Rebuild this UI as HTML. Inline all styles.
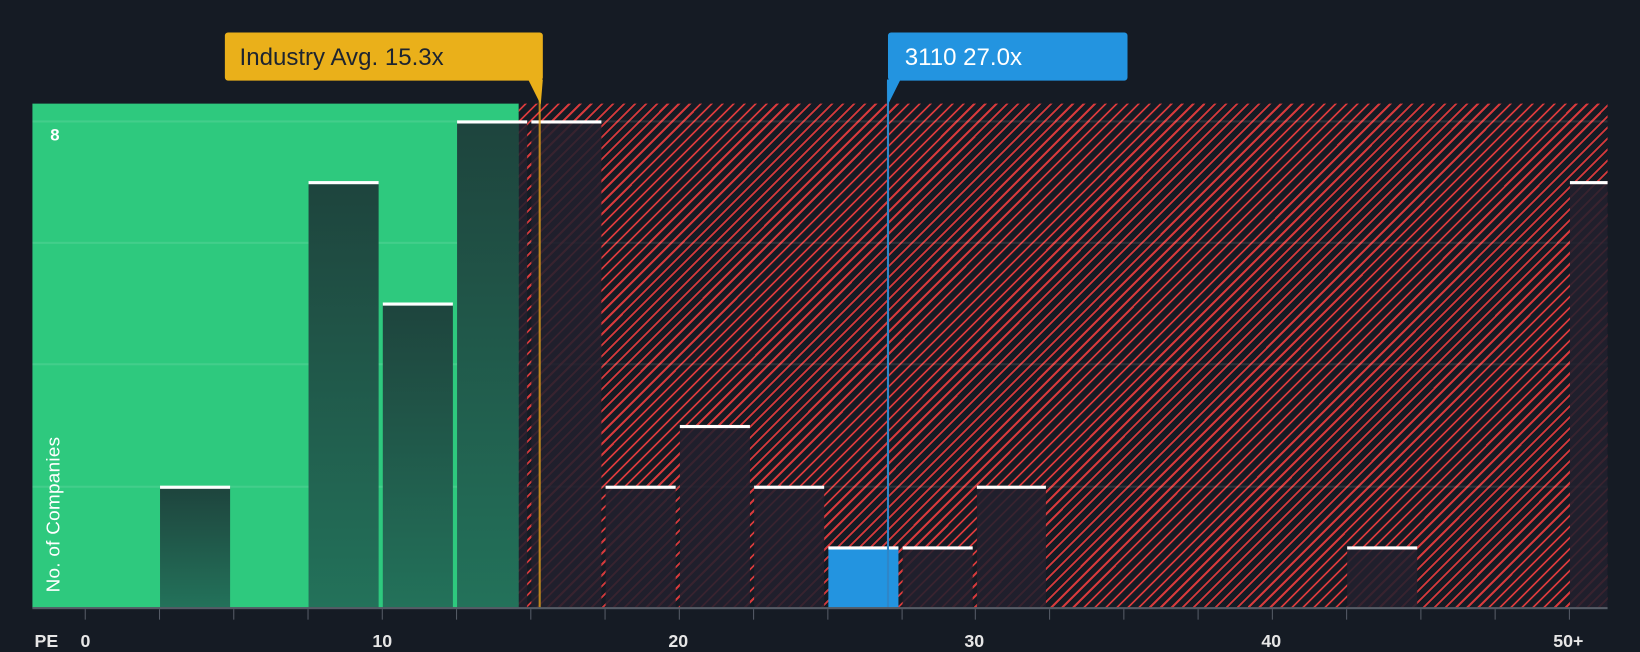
<!DOCTYPE html>
<html><head><meta charset="utf-8"><style>
html,body{margin:0;padding:0;background:#151b24;width:1640px;height:650px;overflow:hidden}
#w{position:absolute;left:0;top:0;width:1568px;height:621px;transform-origin:0 0;transform:scale(1.04592,1.04670);font-family:"Liberation Sans",sans-serif}
.a{position:absolute}
.hatch{background:repeating-linear-gradient(-45deg,#151b24 0px,#151b24 5.6px,#d63a3c 5.6px,#d63a3c 7.4px)}
.g{background:linear-gradient(#1e443d,#23725a)}
.d{background:rgba(34,32,46,0.88)}
.cap{position:absolute;height:3px;background:#fff}
.grid{position:absolute;left:31px;width:1506px;height:2px;background:rgba(255,255,255,0.1)}
.tk{position:absolute;top:582px;width:1px;height:10px;background:#555b66}
.lb{position:absolute;top:603px;color:#e6e6e6;font-size:17px;font-weight:bold}
</style></head><body><div id="w">
<div class="a" style="left:31px;top:99px;width:465px;height:482px;background:#2ec97e"></div>
<div class="a hatch" style="left:496px;top:99px;width:1041px;height:482px"></div>
<div class="grid" style="top:115px"></div>
<div class="grid" style="top:231px"></div>
<div class="grid" style="top:347px"></div>
<div class="grid" style="top:464px"></div>
<div class="a" style="left:48px;top:121px;color:#fff;font-size:16px;font-weight:bold">8</div>
<div class="a" style="left:52px;top:566px;color:#fff;font-size:18px;transform:rotate(-90deg);transform-origin:0 0;white-space:nowrap;letter-spacing:0.3px;margin-left:-11px">No. of Companies</div>
<div class="a g" style="left:153px;top:465px;width:67px;height:116px"></div><div class="cap" style="left:153px;top:464px;width:67px"></div>
<div class="a g" style="left:295px;top:174px;width:67px;height:407px"></div><div class="cap" style="left:295px;top:173px;width:67px"></div>
<div class="a g" style="left:366px;top:290px;width:67px;height:291px"></div><div class="cap" style="left:366px;top:289px;width:67px"></div>
<div class="a g" style="left:437px;top:116px;width:59px;height:465px"></div><div class="a d" style="left:496px;top:116px;width:8px;height:465px"></div><div class="cap" style="left:437px;top:115px;width:67px"></div>
<div class="a d" style="left:508px;top:116px;width:67px;height:465px"></div><div class="cap" style="left:508px;top:115px;width:67px"></div>
<div class="a d" style="left:579px;top:465px;width:67px;height:116px"></div><div class="cap" style="left:579px;top:464px;width:67px"></div>
<div class="a d" style="left:650px;top:407px;width:67px;height:174px"></div><div class="cap" style="left:650px;top:406px;width:67px"></div>
<div class="a d" style="left:721px;top:465px;width:67px;height:116px"></div><div class="cap" style="left:721px;top:464px;width:67px"></div>
<div class="a" style="left:792px;top:523px;width:67px;height:58px;background:#2394e0"></div><div class="cap" style="left:792px;top:522px;width:67px"></div>
<div class="a d" style="left:863px;top:523px;width:67px;height:58px"></div><div class="cap" style="left:863px;top:522px;width:67px"></div>
<div class="a d" style="left:934px;top:465px;width:66px;height:116px"></div><div class="cap" style="left:934px;top:464px;width:66px"></div>
<div class="a d" style="left:1288px;top:523px;width:67px;height:58px"></div><div class="cap" style="left:1288px;top:522px;width:67px"></div>
<div class="a d" style="left:1501px;top:174px;width:36px;height:407px"></div><div class="cap" style="left:1501px;top:173px;width:36px"></div>
<div class="a" style="left:515px;top:77px;width:2px;height:504px;background:#e0a01a;opacity:.8"></div>
<div class="a" style="left:848px;top:77px;width:2px;height:504px;background:#2f86c8"></div>
<div class="a" style="left:215px;top:31px;width:304px;height:46px;background:#eab01a;border-radius:3px"></div>
<svg class="a" style="left:500px;top:76px" width="22" height="25"><polygon points="5,0 19,0 17,24" fill="#eab01a"/></svg>
<div class="a" style="left:229px;top:41px;font-size:23px;color:#1d2430">Industry Avg. 15.3x</div>
<div class="a" style="left:849px;top:31px;width:229px;height:46px;background:#2394e0;border-radius:3px"></div>
<svg class="a" style="left:848px;top:76px" width="16" height="25"><polygon points="0,0 13,0 1,24" fill="#2394e0"/></svg>
<div class="a" style="left:865px;top:41px;font-size:23px;color:#fff">3110 27.0x</div>
<div class="a" style="left:31px;top:580px;width:1506px;height:2px;background:#555b66"></div>
<div class="tk" style="left:81px"></div><div class="tk" style="left:152px"></div><div class="tk" style="left:223px"></div><div class="tk" style="left:294px"></div><div class="tk" style="left:365px"></div><div class="tk" style="left:436px"></div><div class="tk" style="left:507px"></div><div class="tk" style="left:578px"></div><div class="tk" style="left:649px"></div><div class="tk" style="left:720px"></div><div class="tk" style="left:791px"></div><div class="tk" style="left:862px"></div><div class="tk" style="left:932px"></div><div class="tk" style="left:1003px"></div><div class="tk" style="left:1074px"></div><div class="tk" style="left:1145px"></div><div class="tk" style="left:1216px"></div><div class="tk" style="left:1287px"></div><div class="tk" style="left:1358px"></div><div class="tk" style="left:1429px"></div><div class="tk" style="left:1500px"></div>
<div class="lb" style="left:33px">PE</div>
<div class="lb" style="left:77px">0</div>
<div class="lb" style="left:356px">10</div>
<div class="lb" style="left:639px">20</div>
<div class="lb" style="left:922px">30</div>
<div class="lb" style="left:1206px">40</div>
<div class="lb" style="left:1485px">50+</div>
</div></body></html>
